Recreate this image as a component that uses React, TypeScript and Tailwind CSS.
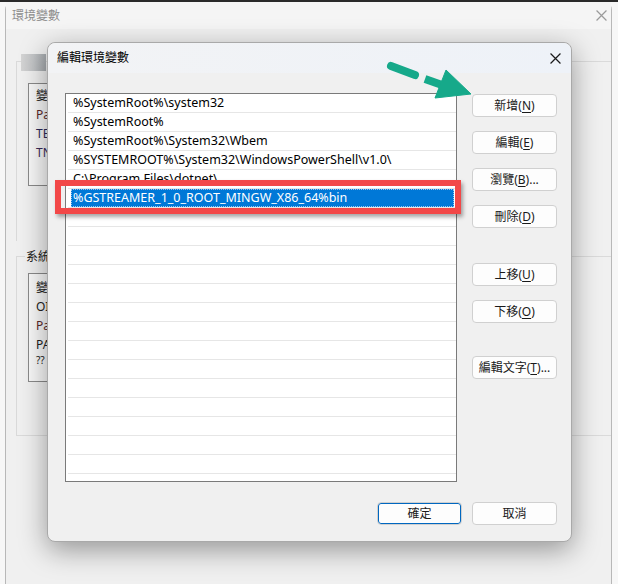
import React from "react";

const FONT = "font-['Noto_Sans','Noto_Sans_CJK_TC',sans-serif]";

const paths = [
  "%SystemRoot%\\system32",
  "%SystemRoot%",
  "%SystemRoot%\\System32\\Wbem",
  "%SYSTEMROOT%\\System32\\WindowsPowerShell\\v1.0\\",
  "C:\\Program Files\\dotnet\\",
  "%GSTREAMER_1_0_ROOT_MINGW_X86_64%bin",
];
const SELECTED = 5;
const ROWS = 20;

function Key({ label, k, tail = "" }: { label: string; k: string; tail?: string }) {
  return (
    <span>
      {label}(<u className="underline-offset-2">{k}</u>){tail}
    </span>
  );
}

function WinButton({ children, className = "" }: { children: React.ReactNode; className?: string }) {
  return (
    <button
      type="button"
      className={`flex h-[23px] w-[85px] items-center justify-center rounded-[4px] border border-[#d0d0d0] bg-[#fdfdfd] text-[12px] leading-none text-[#1a1a1a] ${className}`}
    >
      {children}
    </button>
  );
}

function CloseX({ color, size = 10 }: { color: string; size?: number }) {
  return (
    <svg width={size} height={size} viewBox="0 0 10 10" fill="none" stroke={color} strokeWidth="1.1">
      <path d="M0.5 0.5 L9.5 9.5 M9.5 0.5 L0.5 9.5" />
    </svg>
  );
}

// background "環境變數" window, mostly hidden by the dialog
function BackWindow() {
  return (
    <div className="ml-[5px] mr-[6px] flex flex-1 flex-col rounded-t-[8px] border-x border-[#b8b8b8] bg-[#f0f0f0]">
      <div className="flex h-[27px] shrink-0 items-center justify-between bg-[#f5f5f5] pl-[6px] pr-[4px]">
        <span className="text-[12px] text-[#8c8c8c]">環境變數</span>
        <CloseX color="#9a9a9a" size={11} />
      </div>

      <div className="flex flex-col pl-[10px]">
        {/* 使用者變數 group (title blurred) */}
        <div className="relative mt-[32px] h-[180px] border-l border-t border-[#dadada] pl-[11px] pt-[21px]">
          <div className="absolute left-[4px] top-[-8px] h-[17px] w-[25px] bg-gradient-to-r from-[#d4d4d4] via-[#c2c4c6] to-[#a6aaae]" />
          <div className="h-[103px] w-[40px] border border-[#8a8a8a] bg-[#f8f8f8] pl-[7px] text-[12px] leading-[19px] text-[#222]">
            <div className="pt-[2px]">變</div>
            <div className="text-[#5a2a2a]">Pa</div>
            <div className="text-[#2a2a5a]">TE</div>
            <div className="text-[#3a2a5a]">TN</div>
          </div>
        </div>

        {/* 系統變數 group */}
        <div className="relative mt-[15px] h-[180px] border-b border-l border-t border-[#dadada] pl-[11px] pt-[16px]">
          <span className="absolute left-[8px] top-[-9px] bg-[#f0f0f0] px-[1px] text-[12px] text-[#222]">系統</span>
          <div className="h-[109px] w-[40px] border border-[#8a8a8a] bg-[#f8f8f8] pl-[7px] text-[12px] leading-[19px] text-[#222]">
            <div className="pt-[4px]">變</div>
            <div>OI</div>
            <div className="text-[#5a2a2a]">Pa</div>
            <div>PA</div>
            <div className="text-[10px] leading-[12px]">??</div>
          </div>
        </div>
      </div>
    </div>
  );
}

function PathList() {
  return (
    <div className="h-[389px] w-[392px] overflow-hidden border border-[#7a7a7a] bg-white text-[12.5px] text-black">
      {Array.from({ length: ROWS }).map((_, i) => {
        const text = paths[i];
        const on = i === SELECTED;
        return (
          <div key={i} className="ml-[2px] flex h-[19px] items-stretch border-b border-[#e6e6e6]">
            {on ? (
              <div className="ml-[3px] mr-[2px] flex flex-1 items-center border border-dotted border-[#9cc6ee] bg-[#0078d7] pl-[1px] text-white">
                {text}
              </div>
            ) : (
              <div className="flex items-center whitespace-nowrap pl-[5px]">{text ?? ""}</div>
            )}
          </div>
        );
      })}
    </div>
  );
}

function EditDialog() {
  return (
    <div className="absolute left-[47px] top-[42px] flex h-[500px] w-[525px] flex-col rounded-[8px] border border-[#a9a9a9] bg-[#f0f0f0] shadow-[0_8px_28px_rgba(0,0,0,0.38)]">
      <div className="flex h-[30px] shrink-0 items-center justify-between rounded-t-[8px] bg-gradient-to-r from-[#f2f3f5] to-[#eef2f8] pl-[9px] pr-[10px]">
        <span className="text-[12px] text-black">編輯環境變數</span>
        <CloseX color="#1a1a1a" size={11} />
      </div>

      <div className="flex gap-[15px] pl-[17px] pt-[20px]">
        <PathList />
        <div className="mt-[1px] flex flex-col">
          <WinButton><Key label="新增" k="N" /></WinButton>
          <WinButton className="mt-[14px]"><Key label="編輯" k="E" /></WinButton>
          <WinButton className="mt-[14px]"><Key label="瀏覽" k="B" tail="..." /></WinButton>
          <WinButton className="mt-[14px]"><Key label="刪除" k="D" /></WinButton>
          <WinButton className="mt-[35px]"><Key label="上移" k="U" /></WinButton>
          <WinButton className="mt-[14px]"><Key label="下移" k="O" /></WinButton>
          <WinButton className="mt-[33px]"><Key label="編輯文字" k="T" tail="..." /></WinButton>
        </div>
      </div>

      <div className="mt-[20px] flex justify-end gap-[10px] pr-[14px]">
        <WinButton className="border-[#0067c0] shadow-[inset_0_0_0_1px_#0067c0]">確定</WinButton>
        <WinButton>取消</WinButton>
      </div>
    </div>
  );
}

export default function App() {
  return (
    <div className={`relative flex h-[584px] w-[618px] flex-col overflow-hidden bg-[#f7f7f7] ${FONT}`}>
      <div className="h-[2px] shrink-0 bg-[#2a2a2a]" />
      <BackWindow />
      <EditDialog />

      {/* red highlight around the new entry */}
      <div className="absolute left-[55px] top-[180px] h-[34px] w-[406px] border-[6px] border-[#f24848] shadow-[2px_3px_4px_rgba(0,0,0,0.35)]" />

      {/* green dashed arrow pointing at 新增 */}
      <svg className="absolute left-0 top-0" width="618" height="584" viewBox="0 0 618 584">
        <g fill="#16a98a" stroke="#16a98a">
          <line x1="391" y1="66" x2="415" y2="75" strokeWidth="8" strokeLinecap="round" />
          <line x1="425" y1="79" x2="442" y2="85" strokeWidth="8" />
          <polygon points="446,70 471,94 435,98" strokeWidth="1" strokeLinejoin="round" />
        </g>
      </svg>
    </div>
  );
}
